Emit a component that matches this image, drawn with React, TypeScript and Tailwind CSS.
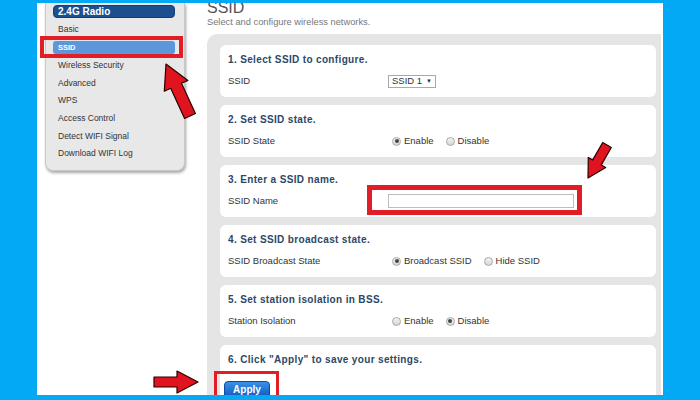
import type { ReactNode } from 'react'

const menu = [
  'Basic',
  'SSID',
  'Wireless Security',
  'Advanced',
  'WPS',
  'Access Control',
  'Detect WIFI Signal',
  'Download WIFI Log',
]

function Radio({ checked, label }: { checked?: boolean; label: string }) {
  return (
    <span className="flex items-center mr-[12px]">
      <span className="w-[9px] h-[9px] rounded-full border border-[#a8a8a8] bg-gradient-to-b from-[#f4f4f4] to-[#d6d6d6] flex items-center justify-center">
        {checked && <span className="w-[4px] h-[4px] rounded-full bg-[#444]" />}
      </span>
      <span className="ml-[3px] text-[9.5px] text-[#333]">{label}</span>
    </span>
  )
}

function Card({ title, label, children }: { title: string; label: string; children: ReactNode }) {
  return (
    <div className="h-[52px] shrink-0 bg-white rounded-[6px] pl-[8px] pt-[8px]">
      <div className="h-[14px] leading-[14px] text-[10px] font-bold tracking-[0.35px] text-[#2c4866]">{title}</div>
      <div className="mt-[6px] h-[16px] flex items-center">
        <div className="w-[160px] text-[9.5px] text-[#333]">{label}</div>
        <div className="flex items-center">{children}</div>
      </div>
    </div>
  )
}

export default function App() {
  return (
    <div
      className="relative w-[700px] h-[400px] overflow-hidden bg-[#03a9f4] px-[37px] pt-[3px] pb-[5px]"
      style={{ fontFamily: '"Liberation Sans", Arial, sans-serif' }}
    >
      <div className="h-full bg-white flex overflow-hidden">
        {/* Sidebar */}
        <aside className="ml-[8px] w-[140px] self-start bg-[#e8e8e8] border-x border-b border-[#c9c9c9] rounded-b-[8px] shadow-[1px_2px_3px_rgba(0,0,0,0.35)] pl-[7px] pr-[9px] pt-[2px] pb-[7px]">
          <div className="h-[13px] rounded-[4px] bg-[#1c4f8f] border border-[#12407a] pl-[4px] flex items-center text-[10px] font-bold text-white mb-[3px]">
            2.4G Radio
          </div>
          {menu.map((item) =>
            item === 'SSID' ? (
              <div key={item} className="relative h-[17.7px] flex items-center">
                <div className="w-full h-[13px] rounded-[3px] bg-[#5b97da] pl-[5px] flex items-center text-[7.5px] font-bold text-white">
                  SSID
                </div>
                <div className="absolute -left-[13px] -right-[8px] -top-[3px] -bottom-[2px] border-[4px] border-[#e11d26]" />
              </div>
            ) : (
              <div key={item} className="h-[17.7px] pl-[5px] flex items-center text-[8.5px] text-[#333]">
                {item}
              </div>
            )
          )}
        </aside>

        {/* Main */}
        <main className="ml-[22px] flex-1 pr-[2px] flex flex-col">
          <h1 className="-mt-[3.5px] text-[16px] leading-[16px] text-[#555]">SSID</h1>
          <p className="mt-[0.5px] h-[12px] leading-[12px] text-[9.3px] text-[#777]">Select and configure wireless networks.</p>
          <div className="mt-[6px] flex-1 bg-[#e5e5e5] rounded-tl-[10px] pt-[11px] pl-[13px] pr-[5px] flex flex-col gap-[8px]">
            <Card title="1. Select SSID to configure." label="SSID">
              <div className="w-[48px] h-[13px] border border-[#a9a9a9] bg-white flex items-center pl-[3px] text-[9.5px] text-[#333]">
                SSID 1<span className="ml-[4px] text-[6px]">▼</span>
              </div>
            </Card>
            <Card title="2. Set SSID state." label="SSID State">
              <span className="ml-[4px]" />
              <Radio checked label="Enable" />
              <Radio label="Disable" />
            </Card>
            <Card title="3. Enter a SSID name." label="SSID Name">
              <div className="relative">
                <div className="w-[186px] h-[14px] border border-[#bdbdbd] bg-white" />
                <div className="absolute -left-[21px] -right-[8px] -top-[9px] -bottom-[7px] border-[5px] border-[#e11d26]" />
              </div>
            </Card>
            <Card title="4. Set SSID broadcast state." label="SSID Broadcast State">
              <span className="ml-[4px]" />
              <Radio checked label="Broadcast SSID" />
              <Radio label="Hide SSID" />
            </Card>
            <Card title="5. Set station isolation in BSS." label="Station Isolation">
              <span className="ml-[4px]" />
              <Radio label="Enable" />
              <Radio checked label="Disable" />
            </Card>
            <div className="flex-1 bg-white rounded-t-[6px] pl-[8px] pt-[8px]">
              <div className="h-[14px] leading-[14px] text-[10px] font-bold tracking-[0.35px] text-[#2c4866]">
                6. Click "Apply" to save your settings.
              </div>
              <div className="relative mt-[9px] -ml-[4px] w-[46px]">
                <button className="w-[46px] h-[18px] rounded-t-[4px] bg-gradient-to-b from-[#3b91e6] to-[#0b56bd] border border-[#0a4aa3] text-[10px] font-bold text-white">
                  Apply
                </button>
                <div className="absolute -left-[10px] -right-[9px] -top-[5px] -bottom-[4px] border-[3px] border-[#e11d26]" />
              </div>
            </div>
          </div>
        </main>
      </div>

      {/* Red pointer arrows */}
      <svg className="absolute left-0 top-0 pointer-events-none" width="700" height="400" viewBox="0 0 700 400">
        <polygon
          points="166,64 187.9,80.4 181.5,83.3 195.4,113.5 184.6,118.5 170.7,88.3 164.3,91.2"
          fill="#e0141e"
          stroke="#2a0000"
          strokeWidth="1.2"
          strokeLinejoin="round"
        />
        <polygon
          points="588,178 605.7,167.4 601.3,164.9 611.3,147.5 602.7,142.5 592.7,159.9 588.3,157.4"
          fill="#e0141e"
          stroke="#2a0000"
          strokeWidth="1.2"
          strokeLinejoin="round"
        />
        <polygon
          points="154,377 177,377 177,371 198,382 177,393 177,387 154,387"
          fill="#e0141e"
          stroke="#2a0000"
          strokeWidth="1.2"
          strokeLinejoin="round"
        />
      </svg>
    </div>
  )
}
